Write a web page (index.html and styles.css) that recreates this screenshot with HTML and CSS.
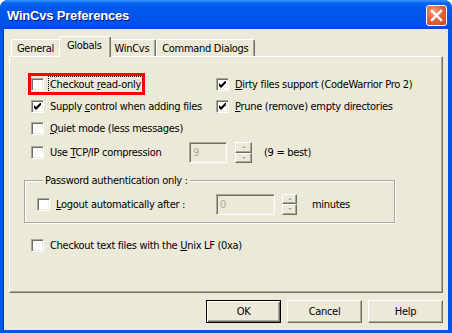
FILE: index.html
```html
<!DOCTYPE html>
<html>
<head>
  <title>WinCvs Preferences</title>
  <link rel="stylesheet" href="styles.css">
</head>
<body>
  <div class="window">
    <div class="titlebar">
      <span class="title">WinCvs Preferences</span>
      <div class="close">
        <svg width="13" height="13" viewBox="0 0 13 13">
          <path d="M2 2 L11 11 M11 2 L2 11" stroke="#fff" stroke-width="2.4" stroke-linecap="square"/>
        </svg>
      </div>
    </div>

    <div class="client">
      <div class="tabs">
        <div class="tab">General</div>
        <div class="tab active">Globals</div>
        <div class="tab">WinCvs</div>
        <div class="tab">Command Dialogs</div>
      </div>

      <div class="panel">
        <div class="options">
          <div class="check marked">
            <span class="box"></span>
            <span class="text focused">Checkout <u>r</u>ead-only</span>
          </div>
          <div class="check">
            <span class="box"><svg width="7" height="7" viewBox="0 0 7 7"><path d="M0 2 L2 4 L7 -1 L7 2 L2 7 L0 5 Z" fill="#000"/></svg></span>
            <span class="text"><u>D</u>irty files support (CodeWarrior Pro 2)</span>
          </div>
          <div class="check">
            <span class="box"><svg width="7" height="7" viewBox="0 0 7 7"><path d="M0 2 L2 4 L7 -1 L7 2 L2 7 L0 5 Z" fill="#000"/></svg></span>
            <span class="text">Supply <u>c</u>ontrol when adding files</span>
          </div>
          <div class="check">
            <span class="box"><svg width="7" height="7" viewBox="0 0 7 7"><path d="M0 2 L2 4 L7 -1 L7 2 L2 7 L0 5 Z" fill="#000"/></svg></span>
            <span class="text"><u>P</u>rune (remove) empty directories</span>
          </div>
          <div class="check">
            <span class="box"></span>
            <span class="text"><u>Q</u>uiet mode (less messages)</span>
          </div>
        </div>

        <div class="row tcp">
          <div class="check tcp-check">
            <span class="box"></span>
            <span class="text">Use <u>T</u>CP/IP compression</span>
          </div>
          <div class="edit small">9</div>
          <div class="spin">
            <span class="spin-btn"><i class="arrow up"></i></span>
            <span class="spin-btn"><i class="arrow down"></i></span>
          </div>
          <span class="hint">(9 = best)</span>
        </div>

        <div class="group">
          <div class="group-label">Password authentication only :</div>
          <div class="row logout">
            <div class="check logout-check">
              <span class="box"></span>
              <span class="text"><u>L</u>ogout automatically after :</span>
            </div>
            <div class="edit wide">0</div>
            <div class="spin narrow">
              <span class="spin-btn"><i class="arrow up"></i></span>
              <span class="spin-btn"><i class="arrow down"></i></span>
            </div>
            <span class="hint minutes">minutes</span>
          </div>
        </div>

        <div class="row unix">
          <div class="check">
            <span class="box"></span>
            <span class="text">Checkout text files with the <u>U</u>nix LF (0xa)</span>
          </div>
        </div>
      </div>

      <div class="buttons">
        <div class="btn default">OK</div>
        <div class="btn">Cancel</div>
        <div class="btn">Help</div>
      </div>
    </div>
  </div>
</body>
</html>
```

FILE: styles.css
```css
body {
  margin: 0;
  font-family: "DejaVu Sans Condensed", "Liberation Sans", sans-serif;
  font-size: 11px;
  line-height: 13px;
  letter-spacing: -0.3px;
  color: #000;
  background: #fff;
}

.window {
  width: 452px;
  height: 333px;
  box-sizing: border-box;
  display: flex;
  flex-direction: column;
  background: #0055ea;
  border-radius: 8px 8px 0 0;
  overflow: hidden;
}

.titlebar {
  height: 29px;
  flex: none;
  display: flex;
  align-items: center;
  justify-content: space-between;
  padding: 1px 5px 0 7px;
  box-sizing: border-box;
  background: linear-gradient(to bottom, #3d95ff 0, #0a66f0 3px, #0058ee 8px, #0056eb 50%, #0052e4 85%, #0047d0 100%);
}

.title {
  color: #fff;
  font-family: "Liberation Sans", sans-serif;
  font-weight: bold;
  font-size: 13px;
  letter-spacing: -0.2px;
  text-shadow: 1px 1px #0a1883;
}

.close {
  width: 21px;
  height: 21px;
  box-sizing: border-box;
  border: 1px solid #fff;
  border-radius: 3px;
  display: flex;
  align-items: center;
  justify-content: center;
  background: radial-gradient(circle at 35% 30%, #f0a283 0, #e2643c 45%, #c94420 100%);
}

.client {
  flex: 1;
  margin: 0 4px 3px 3px;
  padding: 7px 5px 0 6px;
  background: #ece9d8;
  display: flex;
  flex-direction: column;
  box-shadow: inset 1px 0 #0831d9;
}

/* tabs */
.tabs {
  display: flex;
  align-items: flex-end;
  height: 20px;
  margin-left: 2px;
}

.tab {
  height: 17px;
  box-sizing: border-box;
  padding: 2px 6px 0 5px;
  border-top: 1px solid #fff;
  border-left: 1px solid #fff;
  border-right: 1px solid #716f64;
  border-radius: 2px 2px 0 0;
  box-shadow: inset -1px 0 #aca899;
  background: #ece9d8;
  white-space: nowrap;
}

.tab.active {
  height: 21px;
  margin: 0 -2px -1px -2px;
  padding: 2px 8px 0 7px;
  position: relative;
  z-index: 1;
}

.tab.active + .tab {
  border-left: none;
  padding-left: 6px;
}

.panel {
  height: 237px;
  box-sizing: border-box;
  border: 1px solid;
  border-color: #fff #716f64 #716f64 #fff;
  box-shadow: inset -1px -1px #aca899;
  padding: 16px 0 0 14px;
}

/* checkboxes */
.options {
  display: grid;
  grid-template-columns: 185px 1fr;
  grid-auto-rows: 22px;
  align-items: center;
  margin-left: 7px;
}

.check {
  display: flex;
  align-items: center;
  gap: 5px;
  height: 16px;
  width: fit-content;
}

.check.marked {
  outline: 3px solid #ff0000;
}

.box {
  width: 13px;
  height: 13px;
  flex: none;
  box-sizing: border-box;
  border: 1px solid;
  border-color: #aca899 #fff #fff #aca899;
  box-shadow: inset 1px 1px #716f64, inset -1px -1px #f1efe2;
  background: #fff;
  display: flex;
  align-items: center;
  justify-content: center;
}

.box svg {
  display: block;
}

.text {
  padding: 1px 1px;
  white-space: nowrap;
}

.text.focused {
  outline: 1px dotted #000;
}

.row {
  display: flex;
  align-items: center;
}

.tcp {
  height: 25px;
  margin: 1px 0 0 7px;
}

.tcp-check {
  width: 158px;
}

.edit {
  height: 21px;
  box-sizing: border-box;
  border: 1px solid;
  border-color: #aca899 #fff #fff #aca899;
  box-shadow: inset 1px 1px #716f64, inset -1px -1px #f1efe2;
  color: #aca899;
  padding: 3px 0 0 3px;
}

.edit.small {
  width: 38px;
}

.edit.wide {
  width: 59px;
}

.spin {
  width: 17px;
  height: 21px;
  margin-left: 8px;
  display: flex;
  flex-direction: column;
}

.spin.narrow {
  width: 15px;
  margin-left: 7px;
}

.spin-btn {
  flex: 1;
  box-sizing: border-box;
  border: 1px solid;
  border-color: #fff #716f64 #716f64 #fff;
  box-shadow: inset -1px -1px #aca899;
  display: flex;
  align-items: center;
  justify-content: center;
}

.arrow {
  width: 0;
  height: 0;
  border-left: 2px solid transparent;
  border-right: 2px solid transparent;
}

.arrow.up {
  border-bottom: 2px solid #aca899;
}

.arrow.down {
  border-top: 2px solid #aca899;
}

.hint {
  margin-left: 12px;
}

.hint.minutes {
  margin-left: 15px;
}

/* group box */
.group {
  width: 371px;
  box-sizing: border-box;
  margin-top: 15px;
  border: 1px solid #aca899;
  box-shadow: inset 1px 1px #fff, 1px 1px #fff;
  padding: 0 0 7px 12px;
}

.group-label {
  width: fit-content;
  margin: -7px 0 0 6px;
  padding: 0 2px;
  background: #ece9d8;
}

.logout {
  height: 22px;
  margin-top: 6px;
}

.logout-check {
  width: 179px;
}

.unix {
  height: 22px;
  margin: 11px 0 0 7px;
}

/* buttons */
.buttons {
  display: flex;
  justify-content: flex-end;
  gap: 6px;
  margin-top: 7px;
}

.btn {
  width: 75px;
  height: 23px;
  box-sizing: border-box;
  border: 1px solid;
  border-color: #fff #716f64 #716f64 #fff;
  box-shadow: inset -1px -1px #aca899;
  display: flex;
  align-items: center;
  justify-content: center;
}

.btn.default {
  border-color: #000;
  box-shadow: inset 1px 1px #fff, inset -1px -1px #716f64, inset -2px -2px #aca899;
}
```
